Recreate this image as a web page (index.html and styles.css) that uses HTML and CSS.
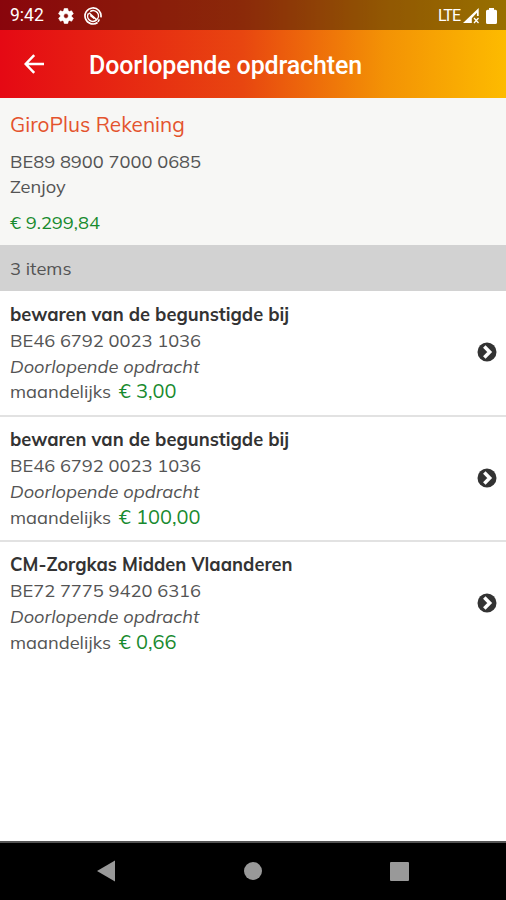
FILE: index.html
```
<!DOCTYPE html>
<html lang="nl">
<head>
<meta charset="utf-8">
<meta name="viewport" content="width=device-width, initial-scale=1">
<title>Doorlopende opdrachten</title>
<link rel="stylesheet" href="styles.css">
</head>
<body>
<div class="screen">
  <header class="top">
    <div class="status">
      <span class="time">9:42</span>
      <svg class="gear" width="18" height="18" viewBox="0 0 24 24"><path fill="#fff" stroke="#fff" stroke-width=".8" fill-rule="evenodd" d="M19.4 13c.1-.3.1-.7.1-1s0-.7-.1-1l2.1-1.600c.2-.2.3-.4.1-.6l-2-3.500c-.1-.2-.4-.3-.6-.2l-2.500 1c-.5-.4-1.100-.7-1.700-1l-.4-2.600c0-.3-.2-.5-.5-.5h-4c-.2 0-.5.2-.5.4l-.4 2.700c-.6.2-1.100.6-1.700 1l-2.500-1c-.2-.1-.5 0-.6.2l-2 3.500c-.1.2-.1.5.1.6L4.500 11c0 .3-.1.7-.1 1s0 .7.1 1l-2.100 1.600c-.2.2-.3.4-.1.6l2 3.500c.1.2.4.3.6.2l2.500-1c.5.4 1.100.7 1.700 1l.4 2.600c0 .3.2.5.5.5h4c.2 0 .5-.2.5-.4l.4-2.700c.6-.2 1.100-.6 1.700-1l2.500 1c.2.1.5 0 .6-.2l2-3.500c.1-.2.1-.5-.1-.6zM12 15.200a3.200 3.200 0 1 1 0-6.400 3.200 3.200 0 0 1 0 6.400z"/></svg>
      <svg class="sync" width="18" height="18" viewBox="0 0 18 18" fill="none" stroke="#fff"><path stroke-width="1.700" d="M13.600 15.500A8 8 0 1 1 16.900 10.300"/><path stroke-width="1.500" d="M4.600 6.200A5.200 5.200 0 0 0 12.500 12.900"/><path stroke-width="1.500" d="M6.200 4.600A5.200 5.200 0 0 1 12.700 12.700L5 5.800"/><path stroke-width="1.600" d="M6.300 8.300L10.500 11.500M15.300 12.400L14 15"/></svg>
      <span class="lte">LTE</span>
      <svg class="signal" width="17" height="16" viewBox="0 0 17 16"><path fill="#fff" fill-rule="evenodd" d="M0 15L15.700 0V8H13.900V4.700L8.800 10.200V15z"/><path stroke="#fff" stroke-width="1.300" d="M11 10l4.500 5M15.500 10L11 15"/></svg>
      <svg class="battery" width="11" height="16" viewBox="0 0 11 16"><path fill="#fff" d="M3 0h5v1.700h1.500q1.500 0 1.500 1.500v11.300q0 1.500-1.500 1.500h-8Q0 16 0 14.500V3.200q0-1.500 1.500-1.500H3z"/></svg>
    </div>
    <div class="bar">
      <svg class="back" width="20" height="20" viewBox="0 0 20 20" fill="none" stroke="#fff" stroke-width="2.500"><path d="M20 10H2M10.200 1.200L1.700 10l8.500 8.800"/></svg>
      <h1>Doorlopende opdrachten</h1>
    </div>
  </header>
  <section class="account">
    <h2>GiroPlus Rekening</h2>
    <div>BE89 8900 7000 0685</div>
    <div>Zenjoy</div>
    <div class="balance">€ 9.299,84</div>
  </section>
  <div class="count">3 items</div>
  <main class="orders">
    <article class="order">
      <div class="details">
        <div class="name">bewaren van de begunstigde bij</div>
        <div>BE46 6792 0023 1036</div>
        <div class="kind">Doorlopende opdracht</div>
        <div class="period">maandelijks <span class="amount">€ 3,00</span></div>
      </div>
      <svg class="chevron" width="20" height="20" viewBox="0 0 20 20"><circle cx="10" cy="10" r="9.500" fill="#333"/><path d="M7.300 4.600L12.700 10l-5.400 5.400" fill="none" stroke="#fff" stroke-width="3.500"/></svg>
    </article>
    <article class="order">
      <div class="details">
        <div class="name">bewaren van de begunstigde bij</div>
        <div>BE46 6792 0023 1036</div>
        <div class="kind">Doorlopende opdracht</div>
        <div class="period">maandelijks <span class="amount">€ 100,00</span></div>
      </div>
      <svg class="chevron" width="20" height="20" viewBox="0 0 20 20"><circle cx="10" cy="10" r="9.500" fill="#333"/><path d="M7.300 4.600L12.700 10l-5.400 5.400" fill="none" stroke="#fff" stroke-width="3.500"/></svg>
    </article>
    <article class="order">
      <div class="details">
        <div class="name">CM-Zorgkas Midden Vlaanderen</div>
        <div>BE72 7775 9420 6316</div>
        <div class="kind">Doorlopende opdracht</div>
        <div class="period">maandelijks <span class="amount">€ 0,66</span></div>
      </div>
      <svg class="chevron" width="20" height="20" viewBox="0 0 20 20"><circle cx="10" cy="10" r="9.500" fill="#333"/><path d="M7.300 4.600L12.700 10l-5.400 5.400" fill="none" stroke="#fff" stroke-width="3.500"/></svg>
    </article>
  </main>
  <nav class="nav">
    <svg width="18" height="22" viewBox="0 0 18 22"><path fill="#999" d="M0 11L18 .5v21z"/></svg>
    <svg width="18" height="18" viewBox="0 0 18 18"><circle cx="9" cy="9" r="9" fill="#999"/></svg>
    <svg width="19" height="19" viewBox="0 0 19 19"><rect width="19" height="19" rx="1" fill="#999"/></svg>
  </nav>
</div>
</body>
</html>
```
FILE: styles.css
```
* { box-sizing: border-box; }
body { margin: 0; }
svg { display: block; flex: none; }
.screen {
  display: flex;
  flex-direction: column;
  width: 506px;
  height: 900px;
  background: #fff;
  color: #545454;
  font: 370 18.3px/25.8px Mulish, "Open Sans", sans-serif;
  overflow: hidden;
  white-space: nowrap;
}
.top {
  height: 98px;
  background: linear-gradient(90deg, #e50914, #e84610 48%, #f39205 76%, #fdbb00);
  color: #fff;
  font-family: Roboto, sans-serif;
}
.status {
  display: flex;
  align-items: center;
  height: 30px;
  padding: 2px 9px 0 10px;
  background: rgba(0, 0, 0, 0.4);
}
.time { width: 47px; font-size: 17.5px; font-weight: 400; }
.sync { margin-left: 9px; }
.lte { margin-left: auto; font-size: 16px; font-weight: 400; letter-spacing: -1px; }
.signal { margin-left: 3px; }
.battery { margin-left: 6px; }
.bar {
  display: flex;
  align-items: center;
  height: 68px;
  padding-left: 24px;
}
.bar h1 {
  margin: 4px 0 0 45px;
  font-size: 25px;
  font-weight: 500;
  letter-spacing: -0.13px;
}
.account {
  height: 147px;
  padding: 10px 10px 0;
  background: #f7f7f5;
}
.account h2 {
  margin: 0 0 8.500px;
  color: #e4532d;
  font-size: 20.8px;
  font-weight: 380;
  line-height: 32px;
}
.balance { margin-top: 9.500px; color: #188a2e; }
.count {
  height: 46px;
  padding-left: 10px;
  background: #d2d2d2;
  line-height: 47px;
}
.orders { flex: 1; }
.order {
  display: flex;
  align-items: center;
  justify-content: space-between;
  height: 125.200px;
  padding: 0 9px 0 10px;
  border-bottom: 2px solid #e2e2e2;
}
.order:first-child { margin-top: 0.6px; }
.order:last-child { border-color: transparent; }
.details { padding-top: 1px; }
.chevron { margin-top: -1.500px; }
.name { color: #333; font-weight: 700; }
.kind { font-style: italic; }
.amount { margin-left: 3px; color: #188a2e; font-size: 20px; line-height: 1; }
.nav {
  display: flex;
  align-items: center;
  justify-content: space-between;
  height: 59px;
  padding: 0 97px 1px;
  border-top: 2px solid #555;
  background: #000;
}
```
